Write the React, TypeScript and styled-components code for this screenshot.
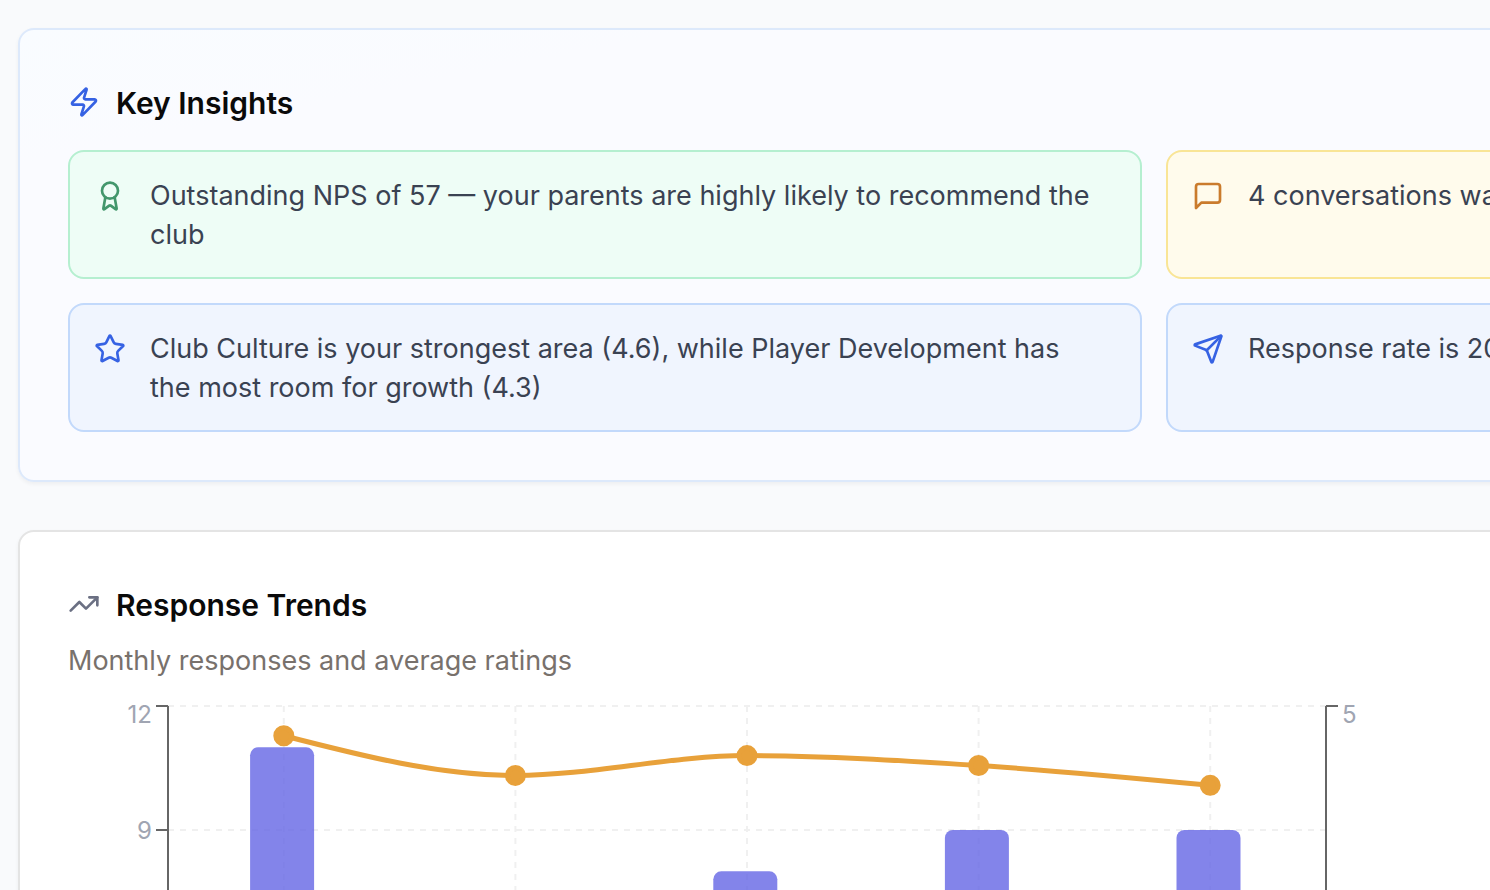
import React from "react";
import styled, { createGlobalStyle } from "styled-components";
import { Award, Send, Star, TrendingUp, Zap } from "lucide-react";

const GlobalStyle = createGlobalStyle`
  *, *::before, *::after { box-sizing: border-box; }
  body {
    margin: 0;
    background: #f9fafc;
    color: #0a0a0a;
    font-family: Inter, "Liberation Sans", sans-serif;
  }
`;

const Page = styled.main`
  height: 100vh;
  overflow: hidden;
  padding: 28px 18px;
`;

const Dashboard = styled.div`
  display: flex;
  flex-direction: column;
  gap: 48px;
  min-width: 2272px;
`;

const Card = styled.section<{ $tinted?: boolean }>`
  padding: 48px;
  border: 2px solid ${(p) => (p.$tinted ? "#dde9fb" : "#e4e4e4")};
  border-radius: 16px;
  background: ${(p) => (p.$tinted ? "linear-gradient(to bottom right, #f9fcff, #fafbff 15%)" : "#ffffff")};
  box-shadow: 0 2px 4px rgba(0, 0, 0, 0.05);
`;

const CardHeading = styled.header<{ $icon: string }>`
  display: flex;
  align-items: center;
  gap: 16px;

  svg { color: ${(p) => p.$icon}; }
`;

const Title = styled.h2`
  margin: 0;
  padding-top: 2px;
  font-size: 30px;
  line-height: 46px;
  font-weight: 600;
`;

const Subtitle = styled.p`
  margin: 13px 0 15px;
  color: #78716c;
  font-size: 27px;
  line-height: 40px;
`;

const InsightGrid = styled.ul`
  display: grid;
  grid-template-columns: repeat(2, 1fr);
  gap: 24px;
  margin: 24px 0 0;
  padding: 0;
  list-style: none;
`;

const tones = {
  green: { border: "#b5efd0", background: "#eefdf6", icon: "#43976c" },
  amber: { border: "#f9e596", background: "#fffbec", icon: "#ca7b2c" },
  blue: { border: "#c2d9fb", background: "#f0f5fe", icon: "#3662e3" },
};

const Insight = styled.li<{ $tone: keyof typeof tones }>`
  display: flex;
  align-items: flex-start;
  gap: 24px;
  padding: 24px 40px 23px 24px;
  border: 2px solid ${(p) => tones[p.$tone].border};
  border-radius: 16px;
  background: ${(p) => tones[p.$tone].background};

  svg {
    flex: none;
    margin-top: 4px;
    color: ${(p) => tones[p.$tone].icon};
  }
`;

const InsightText = styled.p`
  margin: 0;
  color: #3a4252;
  font-size: 27px;
  line-height: 39px;
`;

const Thirds = styled.div`
  display: grid;
  grid-template-columns: repeat(3, 1fr);
  gap: 48px;
`;

const WideCard = styled(Card)`
  grid-column: span 2;
`;

const Chart = styled.svg`
  display: block;
  overflow: visible;
`;

const AxisLabel = styled.text`
  fill: #a0a5b2;
  font-size: 24px;
`;

function MessageIcon() {
  return (
    <svg width="32" height="32" viewBox="0 0 24 24" fill="none" stroke="currentColor" strokeWidth="2" strokeLinecap="round" strokeLinejoin="round" aria-hidden="true">
      <path d="M21 15a2 2 0 0 1-2 2H7l-4 4V5a2 2 0 0 1 2-2h14a2 2 0 0 1 2 2z" />
    </svg>
  );
}

const data = [
  { responses: 11, rating: 4.7 },
  { responses: 5, rating: 4.3 },
  { responses: 8, rating: 4.5 },
  { responses: 9, rating: 4.4 },
  { responses: 9, rating: 4.2 },
];

const plot = { left: 100, right: 1258, top: 10, bottom: 506 };
const plotHeight = plot.bottom - plot.top;
const band = (plot.right - plot.left) / data.length;
const centre = (i: number) => plot.left + band * (i + 0.5);
const yCount = (v: number) => plot.bottom - (v / 12) * plotHeight;
const yRating = (v: number) => plot.bottom - (v / 5) * plotHeight;

/* Monotone cubic interpolation through evenly spaced points. */
function monotonePath(points: [number, number][]) {
  const n = points.length;
  const h = points[1][0] - points[0][0];
  const slopes = points.slice(1).map((p, i) => (p[1] - points[i][1]) / h);
  const tangents = points.map((_, i) => {
    if (i === 0 || i === n - 1) return 0;
    const a = slopes[i - 1];
    const b = slopes[i];
    return (Math.sign(a) + Math.sign(b)) * Math.min(Math.abs(a), Math.abs(b), Math.abs(a + b) / 4);
  });
  tangents[0] = (3 * slopes[0] - tangents[1]) / 2;
  tangents[n - 1] = (3 * slopes[n - 2] - tangents[n - 2]) / 2;
  return points.reduce((d, [x, y], i) => {
    if (i === 0) return `M${x},${y}`;
    const [px, py] = points[i - 1];
    return `${d}C${px + h / 3},${py + (tangents[i - 1] * h) / 3} ${x - h / 3},${y - (tangents[i] * h) / 3} ${x},${y}`;
  }, "");
}

function barPath(x: number, y: number) {
  return `M${x},${plot.bottom}V${y + 8}a8,8 0 0 1 8,-8h48a8,8 0 0 1 8,8V${plot.bottom}Z`;
}

function TrendsChart() {
  const points = data.map((d, i): [number, number] => [centre(i), yRating(d.rating)]);
  return (
    <Chart width="1398" height="600" viewBox="0 0 1398 600" role="img" aria-labelledby="trends-title">
      <g stroke="#f0f0f0" strokeWidth="2" strokeDasharray="6 6">
        {[0, 3, 6, 9, 12].map((v) => (
          <line key={v} x1={plot.left} x2={plot.right} y1={yCount(v)} y2={yCount(v)} />
        ))}
        {data.map((_, i) => (
          <line key={i} x1={centre(i)} x2={centre(i)} y1={plot.top} y2={plot.bottom} />
        ))}
      </g>
      <g fill="#6465e5" fillOpacity="0.8">
        {data.map((d, i) => (
          <path key={i} d={barPath(centre(i) - 33.7, yCount(d.responses))} />
        ))}
      </g>
      <g stroke="#666666" strokeWidth="2" fill="none">
        <path d={`M${plot.left},${plot.top}V${plot.bottom}M${plot.right},${plot.top}V${plot.bottom}`} />
        {[12, 9].map((v) => (
          <path key={v} d={`M${plot.left - 12},${yCount(v)}h12`} />
        ))}
        <path d={`M${plot.right},${plot.top}h12`} />
      </g>
      <AxisLabel x={plot.left - 16} y={27} textAnchor="end">12</AxisLabel>
      <AxisLabel x={plot.left - 16} y={143} textAnchor="end">9</AxisLabel>
      <AxisLabel x={plot.right + 16} y={27}>5</AxisLabel>
      <g stroke="#e8a13a" strokeWidth="5">
        <path d={monotonePath(points)} fill="none" />
        {points.map(([x, y]) => (
          <circle key={x} cx={x} cy={y} r="8" fill="#e8a13a" />
        ))}
      </g>
    </Chart>
  );
}

export default function App() {
  return (
    <Page>
      <GlobalStyle />
      <Dashboard>
        <Card $tinted>
          <CardHeading $icon="#3662e3">
            <Zap size={32} />
            <Title>Key Insights</Title>
          </CardHeading>
          <InsightGrid>
            <Insight $tone="green">
              <Award size={32} />
              <InsightText>Outstanding NPS of 57 — your parents are highly likely to recommend the club</InsightText>
            </Insight>
            <Insight $tone="amber">
              <MessageIcon />
              <InsightText>4 conversations wa</InsightText>
            </Insight>
            <Insight $tone="blue">
              <Star size={32} />
              <InsightText>Club Culture is your strongest area (4.6), while Player Development has the most room for growth (4.3)</InsightText>
            </Insight>
            <Insight $tone="blue">
              <Send size={32} />
              <InsightText>Response rate is 20</InsightText>
            </Insight>
          </InsightGrid>
        </Card>
        <Thirds>
          <WideCard>
            <CardHeading $icon="#6b7083">
              <TrendingUp size={32} />
              <Title id="trends-title">Response Trends</Title>
            </CardHeading>
            <Subtitle>Monthly responses and average ratings</Subtitle>
            <TrendsChart />
          </WideCard>
        </Thirds>
      </Dashboard>
    </Page>
  );
}
